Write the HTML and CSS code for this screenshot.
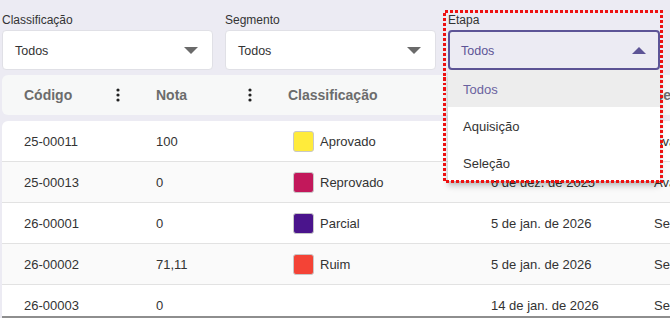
FILE: index.html
```html
<!DOCTYPE html>
<html>
<head>
    <title>Avaliações</title>
    <link rel="stylesheet" href="styles.css">
</head>
<body>
    <div class="page">
        <div class="filters">
            <div class="filter">
                <span class="filter-label">Classificação</span>
                <div class="select">
                    <span class="select-value">Todos</span>
                    <span class="caret"></span>
                </div>
            </div>
            <div class="filter">
                <span class="filter-label">Segmento</span>
                <div class="select">
                    <span class="select-value">Todos</span>
                    <span class="caret"></span>
                </div>
            </div>
            <div class="filter filter-open">
                <span class="filter-label">Etapa</span>
                <div class="select select-active">
                    <span class="select-value">Todos</span>
                    <span class="caret caret-up"></span>
                </div>
                <ul class="menu">
                    <li class="menu-item selected">Todos</li>
                    <li class="menu-item">Aquisição</li>
                    <li class="menu-item">Seleção</li>
                </ul>
                <!-- highlight annotation -->
                <svg class="highlight" width="220" height="173" viewBox="0 0 220 173">
                    <rect x="1.5" y="1.5" width="217" height="170" fill="none" stroke="#ee1111" stroke-width="3" stroke-dasharray="3 2" shape-rendering="crispEdges"/>
                </svg>
            </div>
        </div>

        <div class="grid-head">
            <div class="head-cell"><span>Código</span><svg class="dots" width="4" height="14" viewBox="0 0 4 14"><circle cx="2" cy="2" r="1.6"/><circle cx="2" cy="7" r="1.6"/><circle cx="2" cy="12" r="1.6"/></svg></div>
            <div class="head-cell"><span>Nota</span><svg class="dots" width="4" height="14" viewBox="0 0 4 14"><circle cx="2" cy="2" r="1.6"/><circle cx="2" cy="7" r="1.6"/><circle cx="2" cy="12" r="1.6"/></svg></div>
            <div class="head-cell"><span>Classificação</span><svg class="dots" width="4" height="14" viewBox="0 0 4 14"><circle cx="2" cy="2" r="1.6"/><circle cx="2" cy="7" r="1.6"/><circle cx="2" cy="12" r="1.6"/></svg></div>
            <div class="head-cell"><span>Data</span><svg class="dots" width="4" height="14" viewBox="0 0 4 14"><circle cx="2" cy="2" r="1.6"/><circle cx="2" cy="7" r="1.6"/><circle cx="2" cy="12" r="1.6"/></svg></div>
            <div class="head-cell"><span>Segmento</span></div>
        </div>

        <div class="grid-body">
            <div class="row">
                <div class="cell">25-00011</div>
                <div class="cell">100</div>
                <div class="cell"><span class="swatch swatch-yellow"></span>Aprovado</div>
                <div class="cell">2 de dez. de 2025</div>
                <div class="cell">Avaliação</div>
            </div>
            <div class="row row-alt">
                <div class="cell">25-00013</div>
                <div class="cell">0</div>
                <div class="cell"><span class="swatch swatch-crimson"></span>Reprovado</div>
                <div class="cell">6 de dez. de 2025</div>
                <div class="cell">Avaliação</div>
            </div>
            <div class="row">
                <div class="cell">26-00001</div>
                <div class="cell">0</div>
                <div class="cell"><span class="swatch swatch-purple"></span>Parcial</div>
                <div class="cell">5 de jan. de 2026</div>
                <div class="cell">Seleção</div>
            </div>
            <div class="row row-alt">
                <div class="cell">26-00002</div>
                <div class="cell">71,11</div>
                <div class="cell"><span class="swatch swatch-red"></span>Ruim</div>
                <div class="cell">5 de jan. de 2026</div>
                <div class="cell">Seleção</div>
            </div>
            <div class="row">
                <div class="cell">26-00003</div>
                <div class="cell">0</div>
                <div class="cell"></div>
                <div class="cell">14 de jan. de 2026</div>
                <div class="cell">Seleção</div>
            </div>
        </div>
    </div>
</body>
</html>
```

FILE: styles.css
```css
body {
    margin: 0;
    padding: 0;
    background-color: #ecebf3;
    font-family: "Liberation Sans", Arial, sans-serif;
    color: #333333;
    overflow: hidden;
}
.page {
    width: 840px;
    padding-left: 2px;
    height: 318px;
    overflow: hidden;
}

/* filters */
.filters {
    display: flex;
    gap: 12px;
    padding-top: 12px;
    margin-bottom: 5px;
}
.filter {
    width: 211px;
    display: flex;
    flex-direction: column;
    position: relative;
}
.filter-open {
    width: 212px;
    z-index: 20;
}
.filter-label {
    font-size: 12px;
    line-height: 16px;
    margin-bottom: 2px;
    color: #333333;
}
.select {
    height: 40px;
    box-sizing: border-box;
    background-color: #ffffff;
    border: 1px solid #e0e0e6;
    border-radius: 4px;
    display: flex;
    align-items: center;
    justify-content: space-between;
    padding: 1px 14px 0 12px;
}
.select-value {
    font-size: 12.5px;
}
.select-active {
    background-color: transparent;
    border: 2px solid #5d5496;
    padding: 1px 12px 0 11px;
}
.select-active .select-value {
    color: #5d5496;
}
.caret {
    width: 0;
    height: 0;
    border-left: 7px solid transparent;
    border-right: 7px solid transparent;
    border-top: 7px solid #6a6a6a;
}
.caret-up {
    border-top: none;
    border-bottom: 7px solid #5d5496;
}

/* dropdown */
.menu {
    position: absolute;
    top: 58px;
    left: 0;
    width: 212px;
    margin: 0;
    padding: 0;
    list-style: none;
    background-color: #ffffff;
    box-shadow: 0 5px 6px rgba(0, 0, 0, 0.22), 0 2px 3px rgba(0, 0, 0, 0.1);
}
.menu-item {
    height: 37px;
    display: flex;
    align-items: center;
    padding: 1px 0 0 15px;
    box-sizing: border-box;
    font-size: 13px;
    color: #333333;
}
.menu-item.selected {
    background-color: #ededed;
    color: #6a629f;
}
.highlight {
    position: absolute;
    left: -5px;
    top: -2px;
    pointer-events: none;
}

/* grid */
.grid-head, .row {
    display: grid;
    grid-template-columns: 132px 132px 203px 163px 200px;
}
.grid-head {
    height: 40px;
    background-color: #f7f8f8;
    border-radius: 6px 0 0 6px;
    margin-bottom: 6px;
}
.head-cell {
    display: flex;
    align-items: center;
    justify-content: space-between;
    padding: 0 14px 0 22px;
    font-size: 14px;
    font-weight: bold;
    color: #6c6c6c;
}
.dots {
    fill: #222222;
}
.grid-body {
    background-color: #ffffff;
    border-radius: 6px 0 0 0;
    height: 195px;
    overflow: hidden;
    border-bottom: 2px solid #8e8e8e;
}
.row {
    height: 40px;
    border-bottom: 1px solid #e2e2e2;
}
.row-alt {
    background-color: #fafafa;
}
.cell {
    display: flex;
    align-items: center;
    padding-left: 22px;
    font-size: 13px;
    color: #333333;
}
.swatch {
    width: 19px;
    height: 19px;
    border: 1px solid #c8c8c8;
    border-radius: 3px;
    margin: 0 6px 0 5px;
}
.swatch-yellow {
    background-color: #ffeb3b;
}
.swatch-crimson {
    background-color: #c2185b;
}
.swatch-purple {
    background-color: #4a148c;
}
.swatch-red {
    background-color: #f44336;
}
```
